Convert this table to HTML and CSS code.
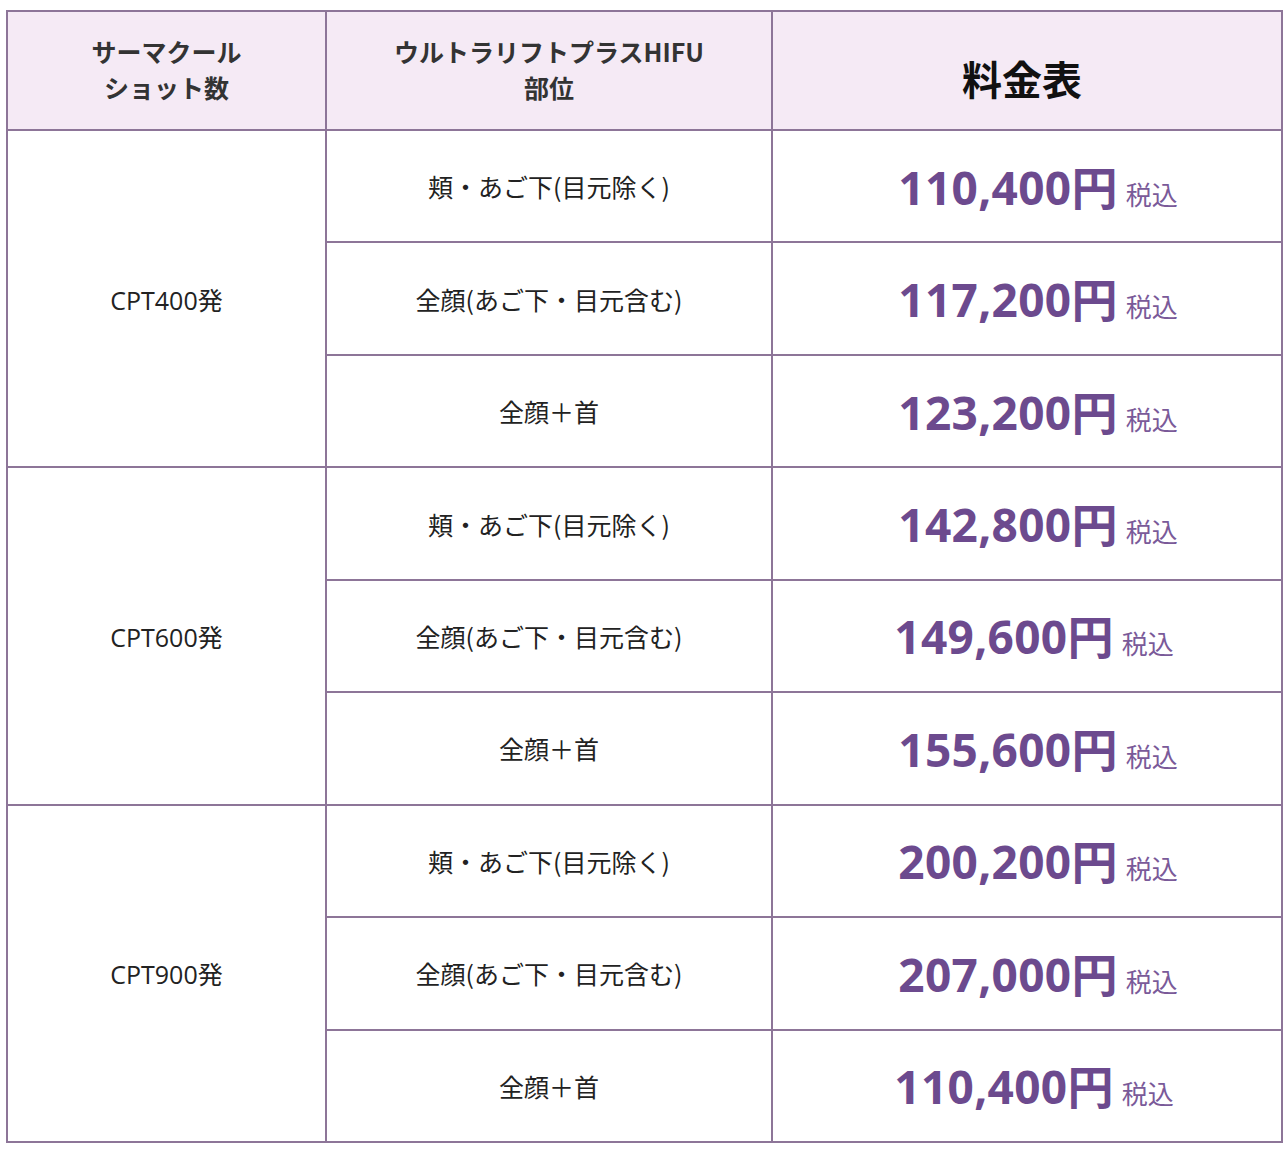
FILE: index.html
```html
<!DOCTYPE html>
<html lang="ja">
<head>
<meta charset="utf-8">
<link rel="stylesheet" href="styles.css">
</head>
<body>
<table class="price-table">
  <colgroup>
    <col class="c1"><col class="c2"><col class="c3">
  </colgroup>
  <thead>
    <tr>
      <th>サーマクール<br>ショット数</th>
      <th>ウルトラリフトプラスHIFU<br>部位</th>
      <th class="title">料金表</th>
    </tr>
  </thead>
  <tbody>
    <tr><td rowspan="3" class="shots">CPT400発</td><td class="area">頬・あご下(目元除く)</td><td class="price"><span class="num">110,400円</span><span class="tax">税込</span></td></tr>
    <tr><td class="area">全顔(あご下・目元含む)</td><td class="price"><span class="num">117,200円</span><span class="tax">税込</span></td></tr>
    <tr><td class="area">全顔＋首</td><td class="price"><span class="num">123,200円</span><span class="tax">税込</span></td></tr>
    <tr><td rowspan="3" class="shots">CPT600発</td><td class="area">頬・あご下(目元除く)</td><td class="price"><span class="num">142,800円</span><span class="tax">税込</span></td></tr>
    <tr><td class="area">全顔(あご下・目元含む)</td><td class="price shift"><span class="num">149,600円</span><span class="tax">税込</span></td></tr>
    <tr><td class="area">全顔＋首</td><td class="price"><span class="num">155,600円</span><span class="tax">税込</span></td></tr>
    <tr><td rowspan="3" class="shots">CPT900発</td><td class="area">頬・あご下(目元除く)</td><td class="price"><span class="num">200,200円</span><span class="tax">税込</span></td></tr>
    <tr><td class="area">全顔(あご下・目元含む)</td><td class="price"><span class="num">207,000円</span><span class="tax">税込</span></td></tr>
    <tr><td class="area">全顔＋首</td><td class="price shift"><span class="num">110,400円</span><span class="tax">税込</span></td></tr>
  </tbody>
</table>
</body>
</html>
```
FILE: styles.css
```css
html, body {
  margin: 0;
  padding: 0;
  background: #ffffff;
}
body {
  padding: 10px 0 0 6px;
  font-family: "Noto Sans CJK JP", "Noto Sans", sans-serif;
  color: #222222;
}
.price-table {
  border-collapse: collapse;
  table-layout: fixed;
  width: 1275px;
}
.c1 { width: 319px; }
.c2 { width: 446px; }
.c3 { width: 510px; }
.price-table th,
.price-table td {
  border: 2px solid #8d7598;
  text-align: center;
  vertical-align: middle;
  padding: 0;
}
.price-table th {
  background: #f5eaf5;
  height: 113px;
  padding-bottom: 4px;
  font-size: 25px;
  line-height: 36px;
  font-weight: 700;
  color: #333333;
}
.price-table th.title {
  font-size: 40px;
  color: #111111;
  padding-right: 10px;
  padding-top: 14px;
  padding-bottom: 0;
  height: 103px;
}
.price-table td {
  height: 110.45px;
}
.shots {
  font-family: "Open Sans", "Noto Sans CJK JP", sans-serif;
  font-size: 25px;
}
.area {
  font-size: 25px;
}
.price-table td.price {
  color: #6c4a8e;
  padding-left: 22px;
  padding-bottom: 3px;
  height: 107.45px;
}
.price-table td.price.shift {
  padding-left: 14px;
}
.num {
  font-family: "Noto Sans", "Noto Sans CJK JP", sans-serif;
  font-weight: 700;
  font-size: 46px;
  letter-spacing: 0.3px;
}
.tax {
  font-size: 26px;
  margin-left: 8px;
  color: #7a5a99;
}
```
